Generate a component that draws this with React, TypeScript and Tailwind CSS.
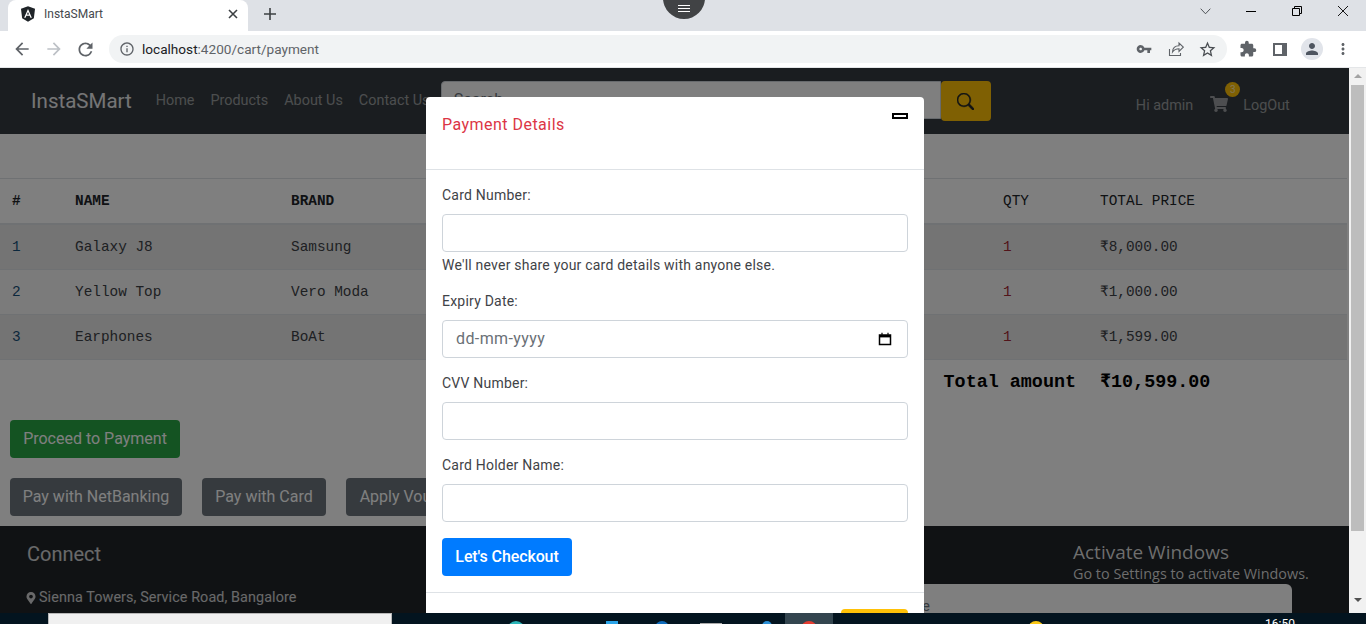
import React from "react";
import { FaMapMarkerAlt, FaShoppingCart } from "react-icons/fa";
import { MdArrowBack, MdArrowForward, MdExtension, MdInfoOutline, MdMoreVert, MdPerson, MdRefresh, MdStarBorder, MdVpnKey } from "react-icons/md";
import { BsSearch } from "react-icons/bs";

const rows = [
  { id: 1, name: "Galaxy J8", brand: "Samsung", price: "₹8,000.00", total: "₹8,000.00" },
  { id: 2, name: "Yellow Top", brand: "Vero Moda", price: "₹1,000.00", total: "₹1,000.00" },
  { id: 3, name: "Earphones", brand: "BoAt", price: "₹1,599.00", total: "₹1,599.00" },
];

function TabStrip() {
  return (
    <div className="flex h-[31px] items-start bg-[#dee1e6] text-[#45494d]">
      <div className="ml-[8px] flex h-[31px] w-[240px] items-center rounded-t-[8px] bg-white pb-[3px] pl-[12px] pr-[10px]">
        <svg viewBox="0 0 24 24" className="h-[16px] w-[16px]">
          <path d="M12 0.5 1.5 4.2l1.7 14L12 23.5l8.8-5.3 1.7-14z" fill="#1f2428" />
          <path d="M12 4.5 6.2 17.5h2.2l1.15-2.9h4.9l1.15 2.9h2.2zm0 4.6 1.7 3.8h-3.4z" fill="#fff" />
        </svg>
        <span className="ml-[8px] flex-1 text-[12px] text-[#45494d]">InstaSMart</span>
        <svg viewBox="0 0 10 10" className="h-[10px] w-[10px]" stroke="#3c4043" strokeWidth="1.6">
          <path d="M1 1l8 8M9 1l-8 8" />
        </svg>
      </div>
      <svg viewBox="0 0 12 12" className="ml-[16px] mt-[8px] h-[12px] w-[12px]" stroke="#3c4043" strokeWidth="1.6">
        <path d="M6 0v12M0 6h12" />
      </svg>
      <div className="flex-1" />
      <svg viewBox="0 0 12 8" className="mt-[8px] h-[7px] w-[11px]" fill="none" stroke="#3c4043">
        <path d="M.5.8 6 6.6 11.5.8" />
      </svg>
      <div className="ml-[35px] mt-[11px] h-px w-[10px] bg-black" />
      <svg viewBox="0 0 10 10" className="ml-[36px] mt-[6px] h-[10px] w-[10px]" fill="none" stroke="#000">
        <path d="M.5 2.5h7v7h-7zM2.5 2.5v-2h7v7h-2" />
      </svg>
      <svg viewBox="0 0 10 10" className="ml-[36px] mr-[18px] mt-[6px] h-[10px] w-[10px]" stroke="#000" strokeWidth=".9">
        <path d="M0 0l10 10M10 0 0 10" />
      </svg>
    </div>
  );
}

function Toolbar() {
  return (
    <div className="flex h-[37px] items-center border-b border-[#e4e6e8] bg-white text-[#5f6368]">
      <MdArrowBack className="ml-[12px] text-[20px]" />
      <MdArrowForward className="ml-[12px] text-[20px] text-[#bdc1c6]" />
      <MdRefresh className="ml-[11px] text-[21px]" />
      <div className="ml-[13px] flex h-[28px] w-[1118px] items-center rounded-full bg-[#f1f3f4]">
        <MdInfoOutline className="ml-[10px] text-[16px]" />
        <span className="ml-[7px] flex-1 text-[13.6px] text-[#5f6368]">
          <span className="text-[#202124]">localhost</span>:4200/cart/payment
        </span>
        <MdVpnKey className="text-[16px]" />
        <svg viewBox="0 0 16 16" className="ml-[16px] h-[16px] w-[16px]" fill="none" stroke="#5f6368" strokeWidth="1.1">
          <path d="M1.5 8v6.5h11V12" />
          <path d="M4.5 11c.2-4 3-6.2 6.5-6.2V2l4.3 4.2L11 10.4V7.7c-3 0-5 1-6.5 3.3z" />
        </svg>
        <MdStarBorder className="ml-[14px] text-[19px] text-[#4a4e52]" />
        <div className="w-[10px]" />
      </div>
      <MdExtension className="ml-[12px] text-[18px]" />
      <div className="ml-[16px] flex h-[13px] w-[14px] justify-end border-2 border-[#5f6368] border-r-[5px] bg-white" />
      <div className="ml-[14px] flex h-[22px] w-[22px] items-center justify-center rounded-full bg-[#e1e4ea]">
        <MdPerson className="text-[18px] text-[#4e5560]" />
      </div>
      <MdMoreVert className="ml-[11px] text-[18px]" />
    </div>
  );
}

function NavBar() {
  return (
    <nav className="flex h-[66px] shrink-0 items-start bg-[#343a40] text-[14.4px] text-white/50">
      <span className="ml-[31px] mt-[20px] text-[20.5px] leading-[26px] text-white/90">InstaSMart</span>
      <div className="ml-[24px] mt-[24px] flex gap-[16px] whitespace-nowrap leading-[18px]">
        <span>Home</span>
        <span>Products</span>
        <span>About Us</span>
        <span className="w-[70px]">Contact Us</span>
      </div>
      <div className="ml-[12px] mt-[13px] flex items-start">
        <div className="flex h-[38px] w-[500px] items-center rounded-l-[4px] border border-[#ced4da] bg-white pl-[12px] text-[16px] text-[#6c757d]">
          Search
        </div>
        <div className="flex h-[40px] w-[50px] items-center justify-center rounded-[4px] bg-[#ffc107] text-[#212529]">
          <BsSearch className="text-[17px]" strokeWidth="0.5" />
        </div>
      </div>
      <span className="ml-[145px] mt-[29px] leading-[18px]">Hi admin</span>
      <div className="relative ml-[17px] mt-[27px]">
        <FaShoppingCart className="text-[18px]" />
        <span className="absolute left-[15px] top-[-13px] flex h-[15px] w-[15px] items-center justify-center rounded-full bg-[#ffc107] text-[10px] text-white/70">3</span>
      </div>
      <span className="ml-[15px] mt-[29px] leading-[18px]">LogOut</span>
    </nav>
  );
}

function CartTable() {
  return (
    <table className="mt-[44px] w-[1347px] shrink-0 table-fixed border-collapse font-['Liberation_Mono',monospace] text-[14.4px] text-[#3d4146]">
      <colgroup>
        <col className="w-[63px]" />
        <col className="w-[216px]" />
        <col className="w-[356px]" />
        <col className="w-[356px]" />
        <col className="w-[97px]" />
        <col />
      </colgroup>
      <thead>
        <tr className="h-[45px] border-y-2 border-t border-[#dee2e6] border-b-[#dee2e6] text-left font-bold text-[#212529]">
          <th className="pl-[12px] pt-[2px]">#</th>
          <th className="px-[12px] pt-[2px]">NAME</th>
          <th className="px-[12px] pt-[2px]">BRAND</th>
          <th className="px-[12px] pt-[2px]">PRICE</th>
          <th className="px-[12px] pt-[2px] font-normal">QTY</th>
          <th className="px-[12px] pt-[2px] font-normal">TOTAL PRICE</th>
        </tr>
      </thead>
      <tbody>
        {rows.map((row, idx) => (
          <tr key={row.id} className={`border-b border-[#dee2e6] ${idx === 0 ? "h-[46px]" : "h-[45px]"} ${idx % 2 === 0 ? "bg-[#e8e8e8]" : "bg-[#f7f7f7]"}`}>
            <td className="pl-[12px] pt-[2px] text-[#17507a]">{row.id}</td>
            <td className="px-[12px] pt-[2px]">{row.name}</td>
            <td className="px-[12px] pt-[2px]">{row.brand}</td>
            <td className="px-[12px] pt-[2px]">{row.price}</td>
            <td className="px-[12px] pt-[2px] text-[#a52834]">1</td>
            <td className="px-[12px] pt-[2px]">{row.total}</td>
          </tr>
        ))}
        <tr className="h-[45px] text-[18.4px] font-bold text-black">
          <td colSpan={5} className="px-[12px] pt-[2px] text-right">Total amount</td>
          <td className="px-[12px] pt-[2px]">₹10,599.00</td>
        </tr>
      </tbody>
    </table>
  );
}

function PaymentButtons() {
  return (
    <div className="ml-[10px] mt-[15px] shrink-0 text-[16px] leading-[24px] text-white">
      <button className="h-[38px] w-[170px] rounded-[4px] bg-[#28a745]">Proceed to Payment</button>
      <div className="mt-[20px] flex gap-[20px]">
        <button className="h-[38px] w-[172px] rounded-[4px] bg-[#6c757d]">Pay with NetBanking</button>
        <button className="h-[38px] w-[124px] rounded-[4px] bg-[#6c757d]">Pay with Card</button>
        <button className="h-[38px] w-[130px] rounded-[4px] bg-[#6c757d]">Apply Voucher</button>
      </div>
    </div>
  );
}

function SiteFooter() {
  return (
    <footer className="mt-[10px] flex h-[100px] shrink-0 items-start bg-[#212529] text-white/80">
      <div className="ml-[27px] w-[693px]">
        <h4 className="mt-[15px] text-[20px] leading-[26px]">Connect</h4>
        <p className="mt-[22px] flex items-center text-[14.4px] leading-[18px] tracking-[0.08px]">
          <FaMapMarkerAlt className="-ml-[2px] mr-[2px] text-[12px]" />
          Sienna Towers, Service Road, Bangalore
        </p>
      </div>
      <div className="mt-[58px] flex h-[60px] w-[572px] justify-end rounded-[6px] bg-white pr-[362px] pt-[13px] text-[14.4px] leading-[20px] text-[#6c757d]">
        Your message here
      </div>
    </footer>
  );
}

function Field({ label, mt = "mt-[15px]", children }: { label: string; mt?: string; children?: React.ReactNode }) {
  return (
    <div className={mt}>
      <div className="text-[14px] leading-[20px] tracking-[0.22px] text-[#3f4347]">{label}</div>
      <div className="mt-[9px] flex h-[38px] items-center rounded-[4px] border border-[#ced4da] bg-white">{children}</div>
    </div>
  );
}

function PaymentModal() {
  return (
    <div className="absolute left-[426px] top-[29px] h-[560px] w-[498px] rounded-[4px] bg-white">
      <div className="flex h-[73px] items-start justify-between border-b border-[#dee2e6] pl-[16px] pr-[16px]">
        <h5 className="mt-[18px] text-[16px] leading-[20px] tracking-[0.47px] text-[#dc3545]">Payment Details</h5>
        <div className="mt-[16px] h-[6px] w-[16px] border-2 border-black bg-white" />
      </div>
      <div className="px-[16px]">
        <Field label="Card Number:">
          <input className="h-full w-full rounded-[4px] outline-none" />
        </Field>
        <p className="mb-[16px] mt-[3px] text-[14px] leading-[20px] tracking-[0.22px] text-[#3f4347]">We'll never share your card details with anyone else.</p>
        <Field label="Expiry Date:" mt="mt-0">
          <span className="ml-[13px] flex-1 text-[16px] tracking-[0.4px] text-[#6a7076]">dd-mm-yyyy</span>
          <svg viewBox="0 0 14 14" className="mr-[15px] h-[14px] w-[14px]" fill="none" stroke="#000">
            <path d="M1.5 3h11v9.5h-11z" strokeWidth="1.5" />
            <path d="M1.5 4.2h11" strokeWidth="2.4" />
            <path d="M4 .8v2M10 .8v2" strokeWidth="1.2" />
          </svg>
        </Field>
        <Field label="CVV Number:">
          <input className="h-full w-full rounded-[4px] outline-none" />
        </Field>
        <Field label="Card Holder Name:">
          <input className="h-full w-full rounded-[4px] outline-none" />
        </Field>
        <button className="mt-[16px] h-[38px] w-[130px] rounded-[4px] bg-[#007bff] text-[16px] font-medium tracking-[-0.1px] text-white">Let's Checkout</button>
      </div>
      <div className="mt-[16px] flex justify-end border-t border-[#dee2e6] pr-[16px] pt-[16px]">
        <button className="h-[38px] w-[67px] rounded-[4px] bg-[#ffc107] text-[16px] text-[#212529]">Close</button>
      </div>
    </div>
  );
}

function Scrollbar() {
  return (
    <div className="flex w-[17px] shrink-0 flex-col items-center bg-[#f1f1f1]">
      <div className="mt-[6px] h-0 w-0 border-x-[4px] border-b-[4px] border-x-transparent border-b-[#a3a3a3]" />
      <div className="mt-[7px] h-[446px] w-[13px] bg-[#bdbdbd]" />
      <div className="mt-[67px] h-0 w-0 border-x-[4px] border-t-[4px] border-x-transparent border-t-[#505050]" />
    </div>
  );
}

function Taskbar() {
  return (
    <div className="flex h-[11px] shrink-0 overflow-hidden bg-[#03141f]">
      <div className="ml-[48px] h-[20px] w-[344px] border border-[#b8b8b8] bg-[#f0f0f0]" />
      <div className="ml-[115px] mt-[8px] h-[18px] w-[18px] rounded-full bg-[#2bb5b8]" />
      <div className="ml-[81px] mt-[8px] h-[10px] w-[12px] bg-[#29a3e8]" />
      <div className="ml-[37px] mt-[8px] h-[14px] w-[14px] rounded-full bg-[#0f6cbd]" />
      <div className="ml-[31px] mt-[10px] h-[10px] w-[22px] bg-[#a9a9a9]" />
      <div className="ml-[40px] mt-[8px] h-[12px] w-[10px] rounded-t-full bg-[#2a8fd6]" />
      <div className="ml-[13px] flex h-[11px] w-[48px] justify-center bg-[#33454f]">
        <div className="mt-[8px] h-[16px] w-[16px] rounded-full bg-[#e53c30]" />
      </div>
      <div className="ml-[195px] mt-[8px] h-[16px] w-[16px] rounded-full bg-[#fbc815]" />
      <div className="ml-[221px] mt-[4px] text-[12px] leading-[14px] text-white">16:50</div>
    </div>
  );
}

export default function App() {
  return (
    <div className="relative flex h-[624px] w-[1366px] flex-col overflow-hidden bg-white font-['Roboto',sans-serif]">
      <TabStrip />
      <Toolbar />
      <div className="flex min-h-0 flex-1">
        <main className="relative flex min-w-0 flex-1 flex-col overflow-hidden bg-white">
          <NavBar />
          <CartTable />
          <PaymentButtons />
          <SiteFooter />
          <div className="absolute inset-0 bg-black/50" />
          <PaymentModal />
          <div className="absolute left-[1073px] top-[472px] font-['Open_Sans',sans-serif] text-[#6e6e6e]">
            <div className="text-[19px] leading-[24px]">Activate Windows</div>
            <div className="text-[14.4px] leading-[20px]">Go to Settings to activate Windows.</div>
          </div>
        </main>
        <Scrollbar />
      </div>
      <Taskbar />
      <div className="absolute left-[663px] top-[-23px] flex h-[42px] w-[42px] items-end justify-center rounded-full bg-[#414345] pb-[7px]">
        <div className="flex w-[12px] flex-col gap-[2px]">
          <div className="h-px bg-white" />
          <div className="h-px bg-white" />
          <div className="h-px bg-white" />
        </div>
      </div>
    </div>
  );
}
